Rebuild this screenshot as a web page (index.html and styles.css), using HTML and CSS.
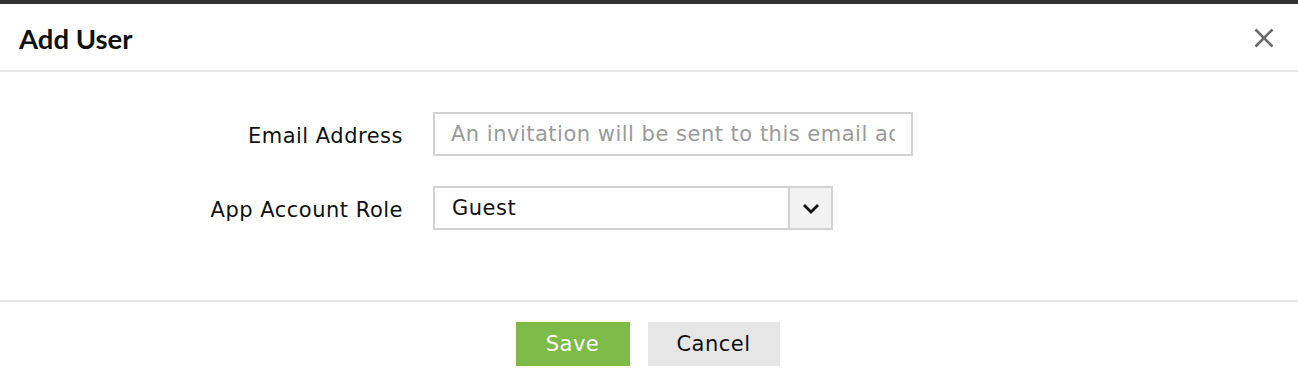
FILE: index.html
```html
<!DOCTYPE html>
<html>
<head>
<meta charset="utf-8">
<link rel="stylesheet" href="styles.css">
</head>
<body>
<div class="dialog">
  <div class="header">
    <h1 class="title">Add User</h1>
    <button class="close" aria-label="Close">
      <svg width="20" height="20" viewBox="0 0 20 20"><path d="M1.5 1.5 L18.5 18.5 M18.5 1.5 L1.5 18.5" stroke="#6b6b6b" stroke-width="2.6" fill="none"/></svg>
    </button>
  </div>
  <div class="body">
    <div class="form">
      <label class="label">Email Address</label>
      <input class="input" type="text" placeholder="An invitation will be sent to this email address">
      <label class="label">App Account Role</label>
      <div class="select">
        <span class="select-value">Guest</span>
        <span class="select-btn">
          <svg width="18" height="11" viewBox="0 0 18 11"><path d="M2 2 L9 9 L16 2" stroke="#111" stroke-width="2.8" fill="none"/></svg>
        </span>
      </div>
    </div>
  </div>
  <div class="footer">
    <button class="btn btn-save">Save</button>
    <button class="btn btn-cancel">Cancel</button>
  </div>
</div>
</body>
</html>
```

FILE: styles.css
```css
* { box-sizing: border-box; }
html, body { margin: 0; padding: 0; background: #fff; }
body { font-family: "DejaVu Sans", Verdana, sans-serif; color: #111; }
.dialog { border-top: 4px solid #333; }
.header {
  height: 68px;
  border-bottom: 2px solid #e6e6e6;
  display: flex;
  align-items: center;
  justify-content: space-between;
  padding: 0 24px 0 19px;
}
.title {
  margin: 0;
  font-family: Lato, "Open Sans", sans-serif;
  font-weight: 700;
  font-size: 27.5px;
  color: #111;
  padding-top: 2px;
}
.close { background: none; border: 0; padding: 0; display: flex; margin-top: 2px; }
.body {
  height: 230px;
  border-bottom: 2px solid #e6e6e6;
  padding-top: 40px;
}
.form {
  display: grid;
  grid-template-columns: 403px auto;
  column-gap: 30px;
  row-gap: 30px;
  align-items: center;
  justify-content: start;
}
.label {
  text-align: right;
  font-size: 21px;
  letter-spacing: 0.5px;
  color: #111;
  padding-top: 3px;
}
.input {
  width: 480px;
  height: 44px;
  border: 2px solid #d2d2d2;
  padding: 0 16px;
  font-family: "DejaVu Sans", Verdana, sans-serif;
  font-size: 21px;
  letter-spacing: 0.5px;
  color: #111;
  outline: none;
}
.input::placeholder { color: #9a9a9a; }
.select {
  width: 400px;
  height: 44px;
  border: 2px solid #d2d2d2;
  display: flex;
  align-items: stretch;
}
.select-value { flex: 1; display: flex; align-items: center; padding-left: 17px; font-size: 21px; letter-spacing: 0.5px; }
.select-btn {
  width: 43px;
  background: #f2f2f2;
  border-left: 2px solid #d2d2d2;
  display: flex;
  align-items: center;
  justify-content: center;
}
.footer {
  display: flex;
  justify-content: center;
  gap: 18px;
  padding: 20px 0 0 0;
  margin-left: -3px;
}
.btn {
  height: 44px;
  border: 0;
  font-family: "DejaVu Sans", Verdana, sans-serif;
  font-size: 21px;
  letter-spacing: 0.5px;
  padding: 0;
}
.btn-save { width: 114px; background: #7dba48; color: #fff; }
.btn-cancel { width: 132px; background: #e6e6e6; color: #111; }
```
